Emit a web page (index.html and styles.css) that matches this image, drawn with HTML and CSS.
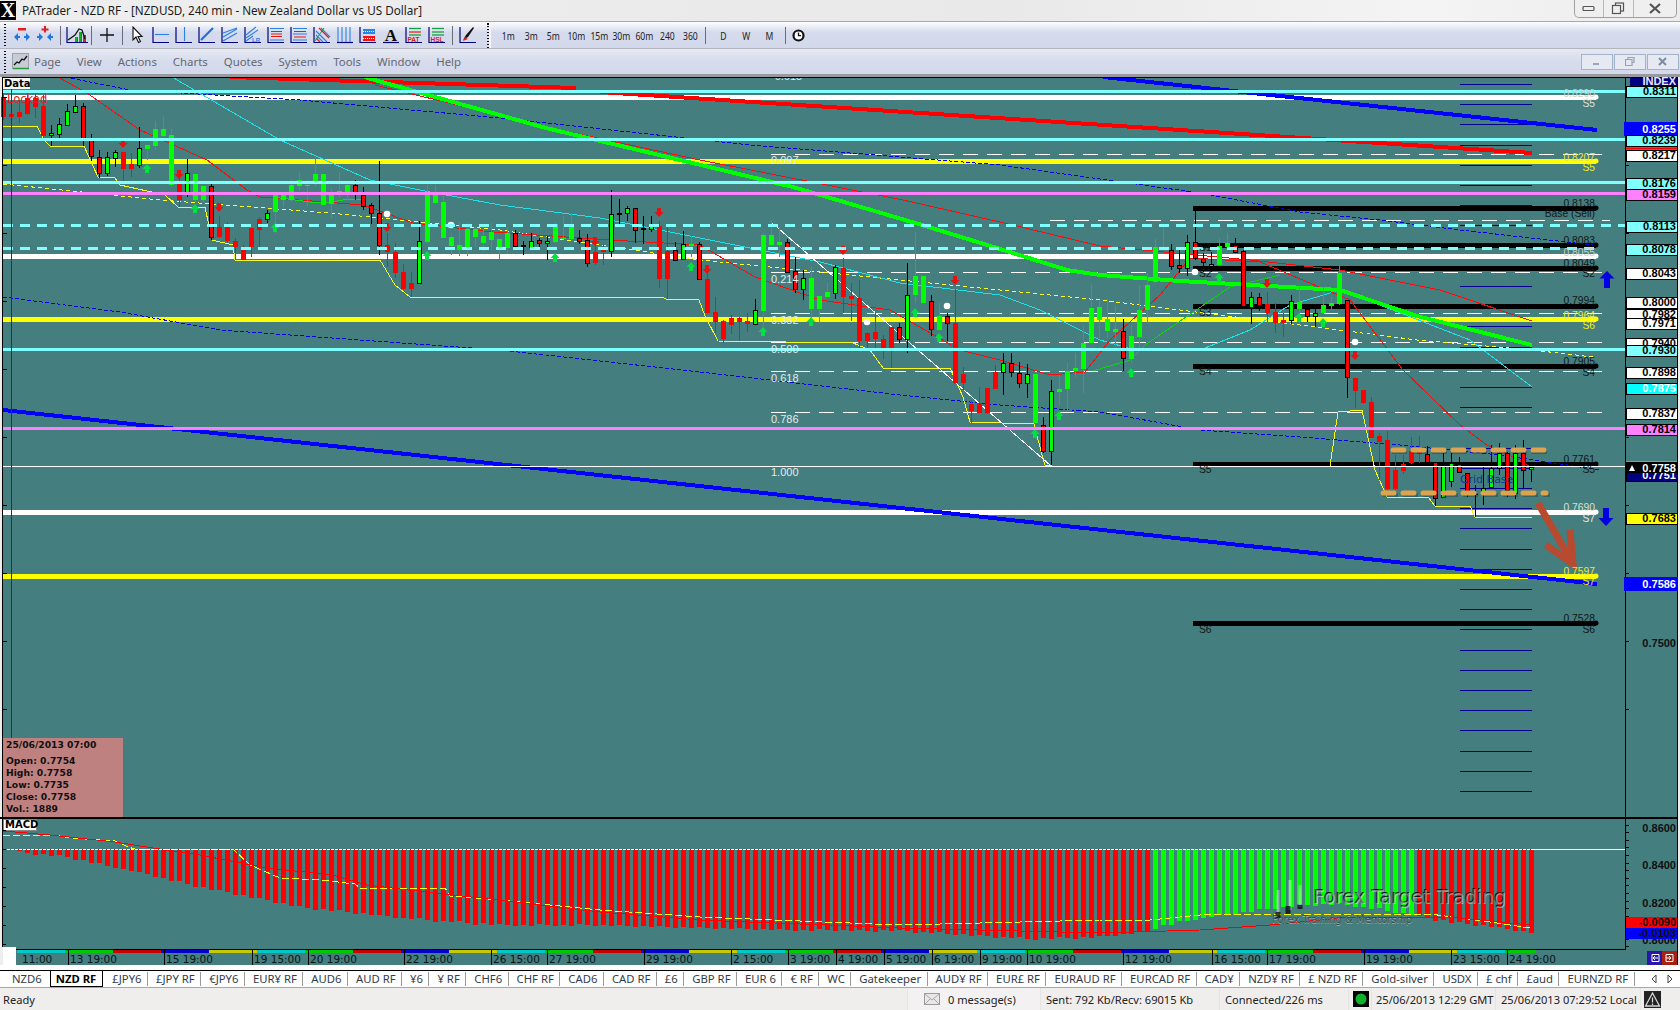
FILE: index.html
```html
<!DOCTYPE html>
<html lang="en">
<head>
<meta charset="utf-8">
<title>PATrader - NZD RF</title>
<link rel="stylesheet" href="styles.css">
</head>
<body>
<div class="app">
  <header class="titlebar">
    <span class="logo">X</span>
    <span class="title">PATrader - NZD RF - [NZDUSD, 240 min - New Zealand Dollar vs US Dollar]</span>
    <div class="winctl">
      <span class="wc wc1"><svg width="14" height="8" viewBox="0 0 14 8"><rect x="1" y="1.500" width="11" height="4" rx="1" class="ic-w"/></svg></span>
      <span class="wc wc2"><svg width="14" height="13" viewBox="0 0 14 13"><rect x="4.500" y="1" width="8" height="8" class="ic-w"/><rect x="1.500" y="3.500" width="8" height="8" class="ic-w ic-bg"/></svg></span>
      <span class="wc wc3"><svg width="14" height="12" viewBox="0 0 14 12"><path d="M2 1l10 9M12 1L2 10" class="ic-x"/></svg></span>
    </div>
  </header>

  <nav class="toolbar">
    <span class="grip"></span>
    <span class="tb"><svg width="18" height="18" viewBox="0 0 18 18"><rect x="5" y="2" width="8" height="2.500" fill="#e02020"/><path d="M1 11l4-4v3h2v2H5v3zM17 11l-4-4v3h-2v2h2v3z" fill="#1e78e0"/></svg></span>
    <span class="tb"><svg width="18" height="18" viewBox="0 0 18 18"><path d="M8 0h2v2.500h2.500v2H10v2H8v-2H5.500v-2H8z" fill="#e02020"/><path d="M7 11l-4-4v3H1v2h2v3zM11 11l4-4v3h2v2h-2v3z" fill="#1e78e0"/></svg></span>
    <span class="sep"></span>
    <span class="tb tb-wide"><svg width="22" height="18" viewBox="0 0 22 18"><path d="M1 1v15.500h21" class="f-navy"/><path d="M9 16v-5h3v5zM13 16V6h3v10zM17 16V9h3v7z" fill="#e02020"/><path d="M13 16V6h2v10zM9 16v-5h2v5z" fill="#10b020"/><path d="M2 14l7-5 4-6 3 1 3 9" class="f-blk"/></svg></span>
    <span class="sep sep-t"></span>
    <span class="tb"><svg width="16" height="16" viewBox="0 0 16 16"><path d="M8 1v14M1 8h14" class="f-blk"/></svg></span>
    <span class="sep"></span>
    <span class="tb"><svg width="16" height="18" viewBox="0 0 16 18"><path d="M3 1v13l3-3 2.500 5.500 2-1-2.500-5h4z" class="f-cur"/></svg></span>
    <span class="tb"><svg width="18" height="18" viewBox="0 0 18 18"><path d="M1 1v15.500h16" class="f-navy"/><path d="M3 8.500h14" class="f-bl"/></svg></span>
    <span class="tb"><svg width="18" height="18" viewBox="0 0 18 18"><path d="M1 1v15.500h16" class="f-navy"/><path d="M9.500 1v14" class="f-bl"/></svg></span>
    <span class="tb"><svg width="18" height="18" viewBox="0 0 18 18"><path d="M1 1v15.500h16" class="f-navy"/><path d="M3 14L15 2" class="f-bl2"/></svg></span>
    <span class="tb"><svg width="18" height="18" viewBox="0 0 18 18"><path d="M1 1v15.500h16" class="f-navy"/><path d="M2 11L16 3M2 15l14-8M2 7l14-5" class="f-bl"/></svg></span>
    <span class="tb"><svg width="18" height="18" viewBox="0 0 18 18"><path d="M1 1v15.500h16" class="f-navy"/><path d="M2 9L12 1M2 12l12-8M2 15l7-5" class="f-bl"/><text x="8" y="15.500" class="ico-t">LR</text></svg></span>
    <span class="tb"><svg width="18" height="18" viewBox="0 0 18 18"><path d="M1 1v15.500h16" class="f-navy"/><path d="M3 2.500h14M3 14h14" class="f-bl"/><path d="M4 5.500h11M4 8h11M4 10.500h11" class="f-red"/></svg></span>
    <span class="tb"><svg width="18" height="18" viewBox="0 0 18 18"><path d="M1 1v15.500h16" class="f-navy"/><path d="M3 2.500h14M3 8h14M3 14h14" class="f-bl"/><path d="M4 5.500h12M4 11h12" class="f-red"/></svg></span>
    <span class="tb"><svg width="18" height="18" viewBox="0 0 18 18"><path d="M1 1v15.500h16" class="f-navy"/><path d="M3 5l11 11M3 9l7 7M8 2l9 9" class="f-bl"/><path d="M3 12l4 4M6 2l10 10" class="f-red"/><path d="M2 15L11 2" class="f-gr"/></svg></span>
    <span class="tb"><svg width="18" height="18" viewBox="0 0 18 18"><path d="M1 16.500h16" class="f-navy"/><path d="M2 1v15M6 1v15M10 1v15M14 1v15" class="f-bl"/></svg></span>
    <span class="tb"><svg width="18" height="18" viewBox="0 0 18 18"><path d="M1 1v15.500h16" class="f-navy"/><rect x="4" y="3" width="12" height="5" fill="#2088e8"/><rect x="4" y="10" width="12" height="5" fill="#e81818"/><path d="M4 5.500h12M4 12.500h12" class="f-dot"/></svg></span>
    <span class="tb"><svg width="18" height="18" viewBox="0 0 18 18"><path d="M1 16.500h16" class="f-navy"/><text x="9" y="15" class="ico-a">A</text></svg></span>
    <span class="tb"><svg width="18" height="18" viewBox="0 0 18 18"><path d="M1 1v15.500h16" class="f-navy"/><path d="M4 2.500h12" class="f-gn"/><path d="M4 6h12" class="f-red"/><path d="M4 9h12" class="f-gn"/><text x="2.500" y="15.500" class="ico-r">PAT</text></svg></span>
    <span class="tb"><svg width="18" height="18" viewBox="0 0 18 18"><path d="M1 1v15.500h16" class="f-navy"/><path d="M4 2.500h12" class="f-gn"/><path d="M4 6h12" class="f-gn"/><path d="M4 9h12" class="f-gn"/><text x="2.500" y="15.500" class="ico-r">HSL</text></svg></span>
    <span class="sep"></span>
    <span class="tb"><svg width="18" height="18" viewBox="0 0 18 18"><path d="M1 1v15.500h16" class="f-navy"/><path d="M4 14l3-5 7-8 1 1-6 9z" fill="#111"/><path d="M6 11l-2 4 5-2z" fill="#d02828"/></svg></span>
    <span class="grip grip2"></span>
    <div class="tf">
      <span>1m</span><span>3m</span><span>5m</span><span>10m</span><span>15m</span><span>30m</span><span>60m</span><span>240</span><span>360</span>
      <i class="sep sep-f"></i>
      <span>D</span><span>W</span><span>M</span>
      <i class="sep sep-f sep-g"></i>
      <b class="clock"><svg width="13" height="13" viewBox="0 0 13 13"><circle cx="6.500" cy="6.500" r="5" class="f-clock"/><path d="M6.500 3.500v3.200h2.500" class="f-hand"/></svg></b>
    </div>
  </nav>

  <nav class="menubar">
    <span class="grip grip3"></span>
    <span class="menuicon"><svg width="17" height="17" viewBox="0 0 17 17"><rect x="0.500" y="0.500" width="16" height="15" class="mi-box"/><path d="M1 15.500h16" class="mi-g"/><path d="M2 12l3-3 2 1 3-4 2 1 3-4" class="f-blk"/></svg></span>
    <div class="menu">
      <span>Page</span><span>View</span><span>Actions</span><span>Charts</span><span>Quotes</span><span>System</span><span>Tools</span><span>Window</span><span>Help</span>
    </div>
    <div class="mdi">
      <span class="mb"><svg width="10" height="8" viewBox="0 0 10 8"><rect x="1" y="5" width="6" height="2" fill="#9aa6b8"/></svg></span>
      <span class="mb"><svg width="10" height="9" viewBox="0 0 10 9"><path d="M3 2.500V.500h6v5H7M.500 2.500h6.500v6H.500z" class="mi-r"/></svg></span>
      <span class="mb"><svg width="10" height="9" viewBox="0 0 10 9"><path d="M1 1l7 7M8 1L1 8" class="mi-x"/></svg></span>
    </div>
  </nav>

  <main class="chartwrap">
    <svg id="chart" class="chart" width="1680" height="888" viewBox="0 77 1680 888"></svg>
  </main>

  <div class="gap"></div>

  <nav class="tabs">
    <span class="tab">NZD6</span><span class="tab active">NZD RF</span><span class="tab">£JPY6</span><span class="tab">£JPY RF</span><span class="tab">€JPY6</span><span class="tab">EUR¥ RF</span><span class="tab">AUD6</span><span class="tab">AUD RF</span><span class="tab">¥6</span><span class="tab">¥ RF</span><span class="tab">CHF6</span><span class="tab">CHF RF</span><span class="tab">CAD6</span><span class="tab">CAD RF</span><span class="tab">£6</span><span class="tab">GBP RF</span><span class="tab">EUR 6</span><span class="tab">€ RF</span><span class="tab">WC</span><span class="tab">Gatekeeper</span><span class="tab">AUD¥ RF</span><span class="tab">EUR£ RF</span><span class="tab">EURAUD RF</span><span class="tab">EURCAD RF</span><span class="tab">CAD¥</span><span class="tab">NZD¥ RF</span><span class="tab">£ NZD RF</span><span class="tab">Gold-silver</span><span class="tab">USDX</span><span class="tab">£ chf</span><span class="tab">£aud</span><span class="tab">EURNZD RF</span>
    <span class="tabarrows">
      <svg width="6" height="10" viewBox="0 0 6 10"><path d="M5 1v8L1 5z" class="ta"/></svg>
      <svg width="6" height="10" viewBox="0 0 6 10"><path d="M1 1v8l4-4z" class="ta"/></svg>
    </span>
  </nav>

  <footer class="status">
    <span class="st st-ready">Ready</span>
    <span class="st st-msg"><svg width="16" height="12" viewBox="0 0 16 12"><rect x="0.500" y="0.500" width="15" height="11" class="mail"/><path d="M1 1l7 6 7-6M1 11l5-5M15 11l-5-5" class="mail-l"/></svg><span>0 message(s)</span></span>
    <span class="st st-sent">Sent: 792 Kb/Recv: 69015 Kb</span>
    <span class="st st-conn">Connected/226 ms</span>
    <span class="st st-led"><svg width="16" height="16" viewBox="0 0 16 16"><rect width="16" height="16" fill="#000"/><circle cx="8" cy="8" r="5.500" fill="#0fb02a"/></svg></span>
    <span class="st st-gmt">25/06/2013 12:29 GMT</span>
    <span class="st st-loc">25/06/2013 07:29:52 Local</span>
    <span class="st st-warn"><svg width="17" height="17" viewBox="0 0 17 17"><rect width="17" height="17" fill="#222"/><path d="M8.500 2L15.500 15h-14z" class="warn"/><path d="M8.500 6.500v5M8.500 12.500v1.500" class="warn"/></svg></span>
  </footer>
</div>
<script src="script.js"></script>
</body>
</html>
```

FILE: styles.css
```css
* { box-sizing: border-box; }
html, body { margin: 0; padding: 0; background: #fff; }
body { font-family: "Noto Sans", "Liberation Sans", sans-serif; font-size: 12px; color: #222; }
.app { width: 1680px; height: 1010px; overflow: hidden; display: flex; flex-direction: column; }

.titlebar { height: 22px; flex: none; display: flex; align-items: flex-start; background: linear-gradient(90deg, #eeeeee 0, #e9e9e9 60%, #f4f4f4 85%, #ececec 100%); border-bottom: 1px solid #a8a8a8; }
.logo { width: 16px; height: 19px; margin-top: 1px; background: #000; color: #fff; font: bold 20px/19px "Liberation Serif", serif; text-align: center; }
.title { margin: 2px 0 0 6px; font-size: 11.700px; line-height: 17px; color: #1c1c1c; white-space: nowrap; }
.winctl { margin-left: auto; margin-right: 3px; width: 103px; height: 18px; display: flex; border: 1px solid #a0a0a0; border-top: 0; border-radius: 0 0 5px 5px; background: #efefef; }
.wc { flex: 1; display: flex; align-items: center; justify-content: center; border-right: 1px solid #b8b8b8; }
.wc3 { border-right: 0; flex: 1.500; }
.ic-w { fill: none; stroke: #555; stroke-width: 1.200; }
.ic-bg { fill: #efefef; }
.ic-x { fill: none; stroke: #555; stroke-width: 2.200; }

.toolbar { height: 27px; flex: none; display: flex; align-items: center; padding-left: 4px; background: linear-gradient(180deg, #fdfdfe 0, #d5dbec 40%, #d3d9ea 100%); border-bottom: 1px solid #b4b6be; position: relative; }
.grip { width: 2px; height: 22px; margin-right: 4px; background: repeating-linear-gradient(180deg, #111 0 1.500px, transparent 1.500px 3px); }
.grip2 { height: 25px; margin-left: 8px; margin-right: 3px; box-shadow: 2px 0 0 #f6f6fa; }
.grip3 { height: 22px; margin-right: 6px; }
.tb { width: 23px; height: 20px; display: flex; align-items: center; justify-content: center; flex: none; }
.tb-wide { width: 26px; }
.sep { width: 1px; height: 19px; flex: none; background: #6c6c78; margin: 0 3px 0 4px; }
.sep-t { margin-left: 1px; }
.sep-f { margin: 0 6px 0 4px; height: 17px; }
.sep-g { margin: 0 6px 0 5px; }
.tf { display: flex; align-items: center; margin-left: 5px; font-size: 11px; color: #222; }
.tf span { width: 22.700px; text-align: center; transform: scaleX(0.78); white-space: nowrap; display: flex; justify-content: center; }
.clock { display: flex; }

.f-navy { fill: none; stroke: #000080; stroke-width: 1.200; }
.f-bl { fill: none; stroke: #2a80e4; stroke-width: 1.100; }
.f-bl2 { fill: none; stroke: #1e70d8; stroke-width: 2.200; }
.f-red { fill: none; stroke: #e81818; stroke-width: 1.200; }
.f-gn { fill: none; stroke: #18a040; stroke-width: 1.300; }
.f-gr { fill: none; stroke: #10a040; stroke-width: 1; }
.f-blk { fill: none; stroke: #111; stroke-width: 1.300; }
.f-cur { fill: #fff; stroke: #111; stroke-width: 1.100; }
.f-dot { fill: none; stroke: #fff; stroke-width: 1; stroke-dasharray: 1 1; }
.f-clock { fill: #fff; stroke: #111; stroke-width: 2.200; }
.f-hand { fill: none; stroke: #111; stroke-width: 1.300; }
.ico-t { font: bold 6px "Liberation Sans", sans-serif; fill: #2a80e4; }
.ico-a { font: bold 17px "Liberation Serif", serif; fill: #0a0a0a; text-anchor: middle; }
.ico-r { font: bold 6.500px "Liberation Sans", sans-serif; fill: #e01818; }

.menubar { height: 28px; flex: none; display: flex; align-items: center; padding-left: 4px; background: linear-gradient(180deg, #e6e9f3 0, #d6dcec 50%, #d3d9ea 100%); border-bottom: 3px solid #989aa0; position: relative; }
.menuicon { width: 17px; height: 17px; margin-right: 5px; display: flex; }
.mi-box { fill: #c9cbd6; stroke: #a0a0a8; }
.mi-g { stroke: #20a030; fill: none; stroke-width: 1.500; }
.menu { display: flex; gap: 16px; color: #656872; font-size: 11.400px; }
.mdi { margin-left: auto; margin-right: 1px; display: flex; gap: 1px; }
.mb { width: 32px; height: 16px; display: flex; align-items: center; justify-content: center; border: 1px solid #a4b4c8; background: #e6e9f2; }
.mi-r { fill: none; stroke: #96a2b4; stroke-width: 1.200; }
.mi-x { fill: none; stroke: #7d8ba0; stroke-width: 2; }

.chartwrap { height: 888px; flex: none; background: #e8e8ea; }
.chart { display: block; }
.gap { height: 5px; background: #fff; flex: none; }

.tabs { height: 18px; flex: none; display: flex; align-items: flex-start; padding-left: 4px; background: #fff; border-top: 1px solid #000; border-bottom: 1px solid #a8a8a8; font-size: 11.300px; color: #333c48; }
.tab { height: 14px; margin-top: 1px; line-height: 14px; padding: 0 5.500px 0 8px; border-right: 1px solid #9a9a9a; white-space: nowrap; }
.tab:first-child { border-right: 0; padding-right: 8px; }
.tab.active { height: 16px; margin-top: 0; padding: 0 6px 0 5px; margin-right: 1px; border-left: 1px solid #000; border-right: 1px solid #000; border-bottom: 1px solid #000; color: #000; font-weight: 700; line-height: 15px; }
.tabarrows { margin-left: auto; margin-right: 7px; margin-top: 3px; display: flex; gap: 10px; }
.ta { fill: #fff; stroke: #444; stroke-width: 1; }

.status { flex: 1; display: flex; align-items: center; background: #f0eded; font-size: 11.100px; color: #222; }
.st { height: 100%; display: flex; align-items: center; flex: none; white-space: nowrap; border-left: 1px solid #e6e3e3; padding-left: 5px; }
.st-ready { width: 907px; padding-left: 3px; border-left: 0; }
.st-msg { width: 133px; padding-left: 16px; gap: 8px; background: #f3f1f1; }
.st-sent { width: 179px; }
.st-conn { width: 129px; }
.st-led { width: 23px; padding-left: 4px; }
.st-gmt { width: 124px; padding-left: 4px; }
.st-loc { width: 145px; }
.st-warn { padding-left: 3px; }
.mail { fill: #e8e8e8; stroke: #9c9c9c; }
.mail-l { fill: none; stroke: #a8a8a8; }
.warn { fill: none; stroke: #d8d8d8; stroke-width: 1.300; }

.lbl { font: bold 11px "Liberation Sans", sans-serif; text-anchor: end; }
.lv { font: 10.300px "Liberation Sans", sans-serif; text-anchor: end; }
.lvl { font: 10.300px "Liberation Sans", sans-serif; }
.fib { font: 11px "Liberation Sans", sans-serif; fill: #e2ecec; }
.tm { font: 10.500px "DejaVu Sans", sans-serif; fill: #0a1414; }
.info { font: bold 9.200px "DejaVu Sans", sans-serif; fill: #101010; }
.tabl { font: bold 10px "DejaVu Sans", sans-serif; fill: #000; }
.lock { font: 11.500px "DejaVu Sans", sans-serif; fill: #e02020; }
.gb { font: 11px "DejaVu Sans", sans-serif; fill: #0a3a90; }
.wm1 { font: 19px "DejaVu Sans", sans-serif; }
.wm2 { font: 10px "DejaVu Sans", sans-serif; }
.crisp { shape-rendering: crispEdges; }
```

FILE: script.js
```js
(function () {
  var TEAL = '#447e7e', CY = '#80ffff', WH = '#ffffff', YE = '#ffff00', BK = '#000000', PK = '#ff80ff', LIME = '#00ff00', RED = '#ff0000', BL = '#0000ff';
  var s = [];
  function R(x, y, w, h, f, extra) { s.push('<rect class="crisp" x="' + x + '" y="' + y + '" width="' + w + '" height="' + h + '" fill="' + f + '"' + (extra || '') + '/>'); }
  function H(x1, x2, y, h, c, dash) { s.push('<path class="crisp" d="M' + x1 + ' ' + y + 'H' + x2 + '" stroke="' + c + '" stroke-width="' + h + '" fill="none"' + (dash ? ' stroke-dasharray="' + dash + '"' : '') + '/>'); }
  function P(pts, c, w, dash) { s.push('<polyline class="crisp" points="' + pts.map(function (p) { return p.join(','); }).join(' ') + '" stroke="' + c + '" stroke-width="' + w + '" fill="none"' + (dash ? ' stroke-dasharray="' + dash + '"' : '') + '/>'); }
  function T(x, y, t, cls, fill, op) { s.push('<text x="' + x + '" y="' + y + '" class="' + cls + '"' + (fill ? ' fill="' + fill + '"' : '') + (op ? ' opacity="' + op + '"' : '') + '>' + t + '</text>'); }
  function thick(x1, x2, y, h, c) { H(x1, x2 - 2, y, h, c); s.push('<circle cx="' + (x2 - 2) + '" cy="' + y + '" r="' + h / 2 + '" fill="' + c + '"/>'); }

  R(0, 77, 1680, 888, '#eeeeee');
  R(3, 77, 1675, 888, TEAL);

  // navy grid ticks
  for (var i = 0; i < 36; i++) { var ny = Math.round(84 + 20.2 * i); if (ny < 800) H(1460, 1532, ny + 0.5, 1, '#000090'); }

  // fib thin dashed lines
  [154, 272, 313, 342, 371, 412].forEach(function (y) { H(771, 1605, y + 0.5, 1, WH, '15 9'); });
  H(1050, 1610, 220.5, 1, WH, '15 9');

  // thick horizontal levels under candles
  thick(3, 1598, 97, 5, WH);
  thick(3, 1598, 161, 5, YE);
  thick(3, 1598, 256, 5, WH);
  thick(3, 1598, 319, 5, YE);
  thick(3, 1598, 512, 5, WH);
  thick(3, 1598, 576, 5, YE);
  [208, 245, 268, 306, 366, 464, 623].forEach(function (y) { thick(1193, 1598, y, 5, BK); });

  // moving averages
  P([[65, 77], [130, 90], [300, 100], [500, 118], [750, 145], [1000, 165], [1200, 193], [1300, 212], [1380, 220], [1460, 230], [1593, 245]], '#0000e0', 1, '4 2');
  P([[3, 297], [120, 312], [220, 330], [500, 350], [700, 372], [900, 395], [1000, 405], [1100, 412], [1200, 430], [1300, 437], [1400, 445], [1500, 455], [1600, 470]], '#0000e0', 1, '4 2');
  P([[3, 184], [160, 200], [330, 213], [500, 230], [700, 260], [900, 280], [1100, 300], [1300, 325], [1417, 340], [1532, 350], [1593, 357]], '#ffff20', 1, '4 3');
  P([[172, 77], [280, 140], [370, 180], [430, 192], [500, 205], [600, 218], [700, 238], [820, 262], [900, 283], [1000, 295], [1040, 310], [1100, 340], [1135, 350], [1205, 348], [1250, 330], [1290, 305], [1340, 290], [1367, 300], [1470, 340], [1532, 387]], '#20e0e8', 1);
  P([[58, 77], [87, 93], [140, 130], [207, 160], [247, 190], [260, 197], [363, 205], [413, 223], [493, 232], [610, 240], [700, 245], [755, 277], [820, 300], [890, 310], [960, 350], [1000, 360], [1050, 375], [1085, 372], [1110, 340], [1160, 295], [1190, 258], [1260, 262], [1350, 300], [1403, 370], [1460, 425], [1487, 445], [1520, 460], [1530, 467]], '#f01010', 1);
  P([[375, 85], [560, 130], [700, 160], [903, 200], [1000, 222], [1100, 246], [1250, 260], [1340, 270], [1440, 290], [1532, 321]], '#f01010', 1);
  P([[273, 197], [310, 202], [330, 202], [350, 199], [365, 199]], '#10e010', 1);
  P([[1093, 371], [1130, 360], [1145, 345], [1230, 287], [1280, 275]], '#10d010', 1);
  // heavy trend lines
  P([[230, 77], [576, 88]], RED, 4);
  P([[600, 92], [1532, 153]], RED, 4);
  P([[1103, 77], [1597, 130]], BL, 4);
  P([[3, 410], [1597, 584]], BL, 4);
  P([[364, 77], [546, 128], [793, 187], [922, 225], [997, 248], [1067, 270], [1100, 275], [1180, 281], [1340, 290], [1417, 316], [1532, 345]], LIME, 4);
  // step line
  P([[3, 126], [37, 126], [44, 140], [50, 146], [84, 146], [98, 177], [115, 178], [120, 185], [165, 195], [178, 207], [205, 207], [212, 240], [233, 245], [235, 260], [380, 260], [395, 285], [410, 297], [662, 297], [666, 299], [699, 300], [705, 316], [718, 341], [853, 343], [870, 350], [883, 368], [950, 368], [963, 397], [970, 422], [1034, 424], [1042, 455], [1045, 465], [1052, 466]], '#f8f820', 1);
  P([[1330, 466], [1338, 412], [1362, 410], [1375, 470], [1387, 497], [1428, 497], [1435, 506], [1470, 506], [1475, 517], [1532, 517]], '#f8f820', 1);
  P([[1052, 466], [1330, 466]], '#f8f820', 1, '10 14');
  // fib diagonal
  P([[771, 222], [1050, 465]], WH, 1);

  // candles: x, top, bottom, wickTop, wickBottom, type
  var groups = [
    [0, 70, [[10, 80, 140, 70, 150, 'r'], [34, 132, 140, 90, 165, 'r'], [58, 125, 140, 90, 158, 'r'], [82, 85, 132, 60, 135, 'r'], [106, 85, 110, 60, 143, 'r'], [130, 108, 198, 75, 205, 'r'], [154, 190, 196, 165, 228, 'k'], [178, 163, 193, 145, 203, 'k'], [202, 124, 166, 102, 168, 'k'], [226, 108, 125, 75, 130, 'k'], [250, 108, 203, 100, 228, 'x'], [274, 203, 258, 192, 272, 'x'], [298, 260, 308, 240, 323, 'x'], [322, 262, 308, 246, 318, 'k'], [346, 247, 263, 240, 290, 'k'], [370, 245, 296, 245, 332, 'r'], [394, 283, 296, 250, 320, 'r'], [418, 235, 284, 170, 295, 'k'], [442, 225, 236, 225, 270, 'l'], [466, 178, 228, 153, 240, 'l'], [490, 177, 198, 138, 200, 'l'], [514, 195, 345, 177, 350, 'l'], [538, 340, 390, 300, 410, 'r'], [562, 310, 366, 268, 380, 'k'], [586, 312, 390, 312, 395, 'l'], [610, 348, 390, 348, 395, 'l'], [634, 348, 500, 340, 510, 'x'], [658, 470, 502, 438, 505, 'r'], [682, 470, 514, 455, 520, 'r'], [706, 514, 530, 505, 570, 'r'], [730, 530, 570, 525, 570, 'r'], [754, 474, 530, 474, 560, 'r'], [778, 448, 480, 440, 530, 'r'], [802, 428, 448, 420, 460, 'k'], [826, 375, 427, 375, 490, 'l'], [850, 375, 390, 375, 412, 'l'], [874, 345, 390, 328, 395, 'l'], [898, 330, 348, 305, 362, 'l'], [922, 345, 345, 330, 408, 'l'], [946, 312, 332, 260, 350, 'l'], [970, 312, 405, 312, 405, 'l'], [994, 376, 402, 355, 448, 'l'], [1018, 363, 367, 305, 380, 'l'], [1042, 345, 365, 332, 390, 'l'], [1066, 346, 372, 330, 390, 'x'], [1090, 376, 408, 350, 420, 'x'], [1114, 405, 430, 400, 462, 'x'], [1138, 430, 526, 272, 556, 'x'], [1162, 525, 545, 490, 590, 'r'], [1186, 545, 610, 520, 625, 'r'], [1210, 606, 656, 582, 660, 'r'], [1234, 640, 656, 605, 682, 'r'], [1258, 514, 640, 452, 642, 'k'], [1282, 375, 515, 345, 520, 'l'], [1306, 375, 400, 345, 402, 'l'], [1330, 396, 503, 375, 505, 'l'], [1354, 502, 528, 490, 555, 'l'], [1378, 525, 540, 455, 558, 'l'], [1402, 478, 540, 460, 558, 'l'], [1426, 478, 500, 470, 530, 'l'], [1450, 498, 518, 478, 545, 'l'], [1474, 486, 510, 460, 540, 'l']]],
    [495, 180, [[13, 177, 203, 177, 238, 'l'], [37, 160, 205, 140, 222, 'l'], [61, 160, 197, 150, 200, 'x'], [85, 195, 200, 182, 225, 'd'], [109, 183, 200, 160, 202, 'k'], [133, 180, 188, 175, 210, 'x'], [157, 182, 188, 168, 240, 'k'], [181, 133, 185, 125, 190, 'l'], [205, 175, 177, 108, 178, 'l'], [229, 140, 177, 100, 180, 'l'], [253, 175, 182, 150, 192, 'x'], [277, 180, 248, 162, 262, 'x'], [301, 215, 250, 170, 256, 'r'], [325, 211, 215, 192, 256, 'r'], [349, 102, 214, 30, 230, 'k'], [373, 100, 104, 56, 135, 'd'], [397, 85, 100, 78, 122, 'k'], [421, 85, 150, 85, 188, 'x'], [445, 145, 149, 108, 192, 'd'], [469, 138, 146, 108, 155, 'k'], [493, 138, 297, 122, 325, 'r'], [517, 212, 297, 140, 356, 'r'], [541, 210, 240, 186, 242, 'x'], [565, 192, 238, 153, 240, 'k'], [589, 192, 198, 167, 232, 'l']]],
    [700, 200, [[-2, 132, 238, 125, 240, 'x'], [22, 237, 340, 220, 342, 'r'], [46, 336, 365, 290, 400, 'r'], [70, 363, 416, 360, 430, 'r'], [94, 354, 375, 345, 402, 'r'], [118, 354, 366, 350, 422, 'r'], [142, 363, 371, 340, 395, 'r'], [166, 331, 371, 297, 372, 'k'], [190, 105, 332, 100, 390, 'l'], [214, 105, 135, 60, 140, 'l'], [238, 126, 135, 80, 170, 'l'], [262, 126, 215, 118, 218, 'x'], [286, 214, 268, 172, 278, 'x'], [310, 235, 268, 210, 300, 'k'], [334, 235, 326, 200, 370, 'l'], [358, 288, 326, 288, 370, 'l'], [382, 276, 290, 250, 292, 'l'], [406, 202, 278, 195, 297, 'k'], [430, 205, 290, 175, 340, 'r'], [454, 288, 296, 250, 362, 'r'], [478, 293, 423, 240, 445, 'r'], [502, 400, 422, 395, 445, 'r'], [526, 396, 418, 335, 445, 'r'], [550, 418, 443, 405, 478, 'r'], [574, 380, 445, 380, 503, 'r'], [598, 380, 418, 370, 430, 'x'], [622, 286, 418, 190, 458, 'k'], [646, 228, 286, 95, 310, 'l'], [670, 228, 308, 228, 310, 'l'], [694, 304, 388, 285, 408, 'x'], [718, 348, 390, 308, 392, 'l'], [742, 348, 370, 338, 423, 'x'], [766, 370, 550, 267, 552, 'r'], [790, 521, 548, 500, 570, 'r'], [814, 612, 634, 600, 668, 'r'], [838, 610, 638, 560, 640, 'r'], [862, 564, 640, 564, 642, 'r'], [886, 516, 566, 495, 568, 'r'], [910, 490, 516, 460, 585, 'k'], [934, 490, 516, 460, 530, 'x'], [958, 518, 550, 487, 565, 'x'], [982, 523, 550, 492, 595, 'k'], [1006, 522, 670, 522, 672, 'l'], [1030, 674, 754, 650, 760, 'x'], [1054, 574, 754, 540, 795, 'k'], [1078, 568, 575, 525, 615, 'l'], [1102, 512, 568, 490, 632, 'l'], [1126, 505, 513, 460, 530, 'l'], [1150, 430, 506, 378, 578, 'l']]],
    [1090, 190, [[4, 354, 460, 282, 465, 'l'], [28, 350, 390, 333, 445, 'l'], [52, 387, 424, 327, 445, 'l'], [76, 417, 427, 348, 470, 'l'], [100, 423, 505, 388, 543, 'x'], [124, 437, 508, 405, 518, 'l'], [148, 360, 440, 285, 475, 'l'], [172, 285, 360, 250, 400, 'l'], [196, 170, 275, 147, 278, 'l'], [220, 170, 178, 108, 180, 'l'], [244, 180, 227, 163, 240, 'x'], [268, 226, 233, 180, 250, 'x'], [292, 157, 233, 135, 258, 'k'], [316, 157, 205, 55, 210, 'x'], [340, 208, 215, 188, 245, 'x'], [364, 222, 228, 185, 245, 'k'], [388, 168, 225, 145, 228, 'l'], [412, 160, 170, 130, 172, 'l'], [436, 165, 186, 145, 188, 'x'], [460, 183, 347, 180, 350, 'x'], [484, 322, 350, 305, 402, 'k'], [508, 322, 344, 310, 362, 'x'], [532, 342, 370, 305, 395, 'r'], [556, 366, 398, 338, 430, 'r'], [580, 390, 400, 368, 440, 'r'], [604, 334, 390, 315, 402, 'k'], [628, 335, 358, 290, 400, 'l'], [652, 356, 378, 356, 395, 'x'], [676, 370, 377, 345, 412, 'k'], [700, 345, 370, 292, 372, 'l'], [724, 340, 348, 320, 360, 'l'], [748, 250, 342, 225, 345, 'l']]],
    [1300, 300, [[142, 0, 232, 0, 295, 'x'], [166, 234, 272, 234, 325, 'r'], [190, 270, 310, 270, 312, 'r'], [214, 306, 413, 290, 415, 'r'], [238, 407, 425, 400, 540, 'r'], [262, 420, 567, 393, 570, 'r'], [286, 510, 567, 465, 570, 'r'], [310, 491, 512, 465, 522, 'r'], [334, 452, 490, 410, 492, 'r'], [358, 450, 462, 408, 490, 'r'], [382, 463, 485, 438, 487, 'x'], [406, 485, 593, 485, 618, 'x'], [430, 498, 592, 460, 595, 'k'], [454, 490, 544, 458, 562, 'k'], [478, 492, 517, 470, 520, 'x'], [502, 518, 572, 518, 590, 'x'], [526, 583, 585, 555, 650, 'd'], [550, 563, 572, 490, 615, 'k'], [574, 505, 562, 435, 565, 'k'], [598, 458, 505, 430, 525, 'k'], [622, 460, 570, 455, 590, 'x'], [646, 458, 578, 435, 598, 'k'], [670, 460, 510, 420, 565, 'x'], [694, 500, 508, 490, 545, 'k']]]
  ];
  groups.forEach(function (g) {
    g[2].forEach(function (c) {
      var cx = Math.round(g[0] + c[0] / 3 - 0.34), t = Math.round(g[1] + c[1] / 3), b = Math.round(g[1] + c[2] / 3), wt = Math.round(g[1] + c[3] / 3), wb = Math.round(g[1] + c[4] / 3), ty = c[5];
      var wc = ty === 'l' ? '#10c810' : ty === 'r' ? '#f01010' : BK;
      if (b <= t) b = t + 1;
      R(cx, wt, 1, wb - wt, wc);
      if (ty === 'l') R(cx - 2, t, 5, b - t, LIME);
      else if (ty === 'r') R(cx - 2, t, 5, b - t, RED);
      else if (ty === 'd') R(cx - 2, t, 5, b - t, BK);
      else { R(cx - 2, t, 5, b - t + 1, BK); if (b - t > 1) R(cx - 1, t + 1, 3, b - t - 1, ty === 'k' ? LIME : RED); }
    });
  });

  // signal arrows and dots
  [[147, 169], [195, 209], [275, 228], [427, 256], [555, 258], [691, 267], [763, 332], [811, 322], [915, 313], [939, 338], [1035, 434], [1059, 416], [1131, 373], [1219, 278], [1299, 318], [1323, 323]].forEach(function (a) {
    s.push('<path d="M' + a[0] + ' ' + (a[1] - 5) + 'l4.500 5h-2.500v4h-4v-4h-2.500z" fill="#00e040"/>');
  });
  [[123, 143], [179, 174], [219, 207], [387, 227], [595, 241], [659, 212], [707, 269], [843, 250], [955, 280], [1267, 283], [1355, 355]].forEach(function (a) {
    s.push('<path d="M' + a[0] + ' ' + (a[1] + 5) + 'l-4.500 -5h2.500v-4h4v4h2.500z" fill="#e81010"/>');
  });
  [[387, 214], [451, 225], [867, 322], [947, 306], [1195, 272], [1355, 342]].forEach(function (d) {
    s.push('<circle cx="' + d[0] + '" cy="' + d[1] + '" r="3.300" fill="#fff"/>');
  });

  // levels above candles
  H(3, 1625, 91, 3, CY);
  H(3, 1625, 139, 3, CY);
  H(3, 1625, 182, 3, CY);
  H(3, 1625, 193.5, 3, PK);
  H(3, 1625, 225, 3, CY, '10 7');
  H(3, 1597, 248, 3, CY, '10 7');
  H(3, 1625, 349, 3, CY);
  H(3, 1625, 428.5, 3, PK);
  H(3, 1625, 466.5, 1, WH);

  // grid base zone
  s.push('<path d="M1392 452H1550M1383 495H1550" stroke="#20302f" stroke-width="4" opacity="0.35" stroke-dasharray="15 5"/>');
  s.push('<path d="M1393 450H1546M1383 493H1546" stroke="#dfa24d" stroke-width="5" stroke-linecap="round" stroke-dasharray="11 9"/>');
  T(1460, 483, 'Grid Base', 'gb');

  // forecast arrow
  s.push('<path d="M1538 503L1573 564M1546 545L1573 564L1570 530" stroke="#b84a30" stroke-width="7" fill="none"/>');
  // side arrows
  s.push('<path d="M1607 271l7.500 7.500h-4.500v9.500h-6v-9.500h-4.500z" fill="#0000e0"/>');
  s.push('<path d="M1606 526l7.500 -8h-4.500v-10h-6v10h-4.500z" fill="#0000e0"/>');

  // fib labels
  T(771, 80, '-0.618', 'fib');
  T(771, 164, '0.097', 'fib');
  [['0.214', 283], ['0.382', 324], ['0.500', 353], ['0.618', 382], ['0.786', 423], ['1.000', 476]].forEach(function (f) { T(771, f[1], f[0], 'fib'); });

  // level labels
  [['0.8290', 97, '#c8d0c8'], ['S5', 107, '#e0e0d8'], ['0.8207', 161, '#e8e840'], ['S5', 171, '#ecec20'], ['0.8138', 207, '#101818'], ['Base (Sell)', 217, '#101818'], ['0.8083', 244, '#101818'], ['0.8055', 256, '#c8d0c8'], ['0.8049', 267, '#101818'], ['S2', 277, '#101818'], ['0.7994', 304, '#101818'], ['0.7964', 319, '#e8e840'], ['S6', 329, '#ecec20'], ['0.7905', 365, '#101818'], ['S4', 376, '#101818'], ['0.7761', 463, '#101818'], ['S5', 473, '#101818'], ['0.7690', 511, '#d8e0d8'], ['S7', 522, '#e8e8e0'], ['0.7597', 575, '#e8e840'], ['S7', 585, '#ecec20'], ['0.7528', 622, '#101818'], ['S6', 633, '#101818']].forEach(function (l) { T(1595, l[1], l[0], 'lv', l[2]); });
  [['S1', 251], ['S2', 277], ['S3', 316], ['S4', 375], ['S5', 473], ['S6', 633]].forEach(function (l) { T(1199, l[1], l[0], 'lvl', '#101818'); });

  // left decoration
  R(11, 77, 1, 661, '#7a1616');
  for (var k = 0; k < 10; k++) R(3, 97 + 68 * k, 4, 1, BK);
  R(3, 78, 27, 11, '#f4f6f6');
  T(4, 87, 'Data', 'tabl');
  T(7, 103, 'Locked', 'lock');

  // info box
  R(3, 738, 120, 79, '#bf8080');
  T(6, 748, '25/06/2013 07:00', 'info');
  [['Open: 0.7754', 764], ['High: 0.7758', 776], ['Low: 0.7735', 788], ['Close: 0.7758', 800], ['Vol.: 1889', 812]].forEach(function (t) { T(6, t[1], t[0], 'info'); });

  // MACD pane
  R(0, 817, 1678, 2, BK);
  R(3, 819, 33, 11, '#ffffff', ' stroke="#888" stroke-width="1"');
  T(5, 828, 'MACD', 'tabl');
  var way = [[19, 852], [67, 857], [100, 864], [150, 875], [200, 887], [250, 897], [300, 907], [350, 912], [400, 918], [467, 923], [500, 925], [600, 925], [700, 928], [800, 930], [900, 931], [1000, 937], [1030, 939], [1100, 937], [1150, 932], [1154, 928], [1180, 922], [1210, 917], [1240, 913], [1270, 909], [1300, 905], [1340, 904], [1370, 908], [1414, 915], [1418, 917], [1450, 922], [1500, 928], [1531, 932]];
  function lerp(x) { for (var i = 1; i < way.length; i++) { if (x <= way[i][0]) { var a = way[i - 1], b = way[i]; return a[1] + (b[1] - a[1]) * (x - a[0]) / (b[0] - a[0]); } } return way[way.length - 1][1]; }
  for (var m = 0; m < 190; m++) {
    var mx = 19.3 + 8 * m, mb = Math.round(lerp(mx) + ((m * 7) % 5 - 2) * 0.5);
    R(Math.round(mx) - 2, 849, 5, mb - 849, (mx > 1152 && mx < 1416) ? LIME : RED);
  }
  P([[3, 835], [55, 835], [70, 838], [115, 841], [128, 847], [135, 849], [233, 849], [250, 865], [280, 878], [320, 880], [355, 884], [360, 888], [445, 888], [450, 896], [500, 900], [600, 910], [700, 917], [900, 925], [1100, 920], [1150, 920], [1210, 914], [1430, 914], [1490, 922], [1530, 928]], YE, 1, '7 3');
  P([[3, 831], [50, 835], [115, 842], [153, 848], [200, 855], [267, 868], [333, 875], [367, 885], [433, 893], [500, 900], [600, 912], [700, 920], [900, 928], [1100, 933], [1200, 930], [1270, 925], [1340, 918], [1450, 917], [1530, 925]], RED, 1);
  H(3, 1533, 849.5, 1, WH, '3 1');
  H(1533, 1625, 849.5, 1, WH);
  // left ticks in MACD
  for (var k2 = 0; k2 < 7; k2++) R(3, 830 + 19 * k2, 3, 1, BK);

  // watermark
  s.push('<path d="M1278 890v24M1290 880v30M1300 885v22" stroke="#e8f0f0" stroke-width="3" opacity="0.45"/>');
  s.push('<path d="M1278 912v6M1288 906v8M1300 905v4" stroke="#000" stroke-width="5" opacity="0.7"/>');
  T(1313, 903, 'Forex Target Trading', 'wm1', '#000000', '0.8');
  T(1314, 904, 'Forex Target Trading', 'wm1', '#f2f6f6', '0.45');
  T(1272, 924, 'Forex Training &amp; Mentorship', 'wm2', '#c4cccc', '0.6');
  T(1272, 923, 'Forex Training &amp; Mentorship', 'wm2', '#324040', '0.8');

  // frame
  R(2, 77, 1, 870, BK);
  R(3, 77, 1675, 1, BK);
  R(1625, 77, 1, 873, BK);
  R(1677, 77, 1, 888, BK);
  R(3, 949, 1623, 1, BK);

  // right axis ticks
  for (var a = 0; a < 10; a++) R(1626, 97 + 68 * a, 3, 1, BK);
  for (var a2 = 0; a2 < 17; a2++) R(1626, 825 + 7.6 * a2 | 0, 3, 1, BK);

  // axis labels
  R(1630, 78, 47, 8, '#000080');
  T(1676, 85, 'INDEX', 'lbl', '#e8e8ff');
  [
    ['0.8255', 129, BL, WH, 1], ['0.8311', 91, CY], ['0.8239', 140, CY], ['0.8217', 155, WH], ['0.8176', 183, CY], ['0.8159', 194, PK], ['0.8113', 226, CY], ['0.8078', 249, CY], ['0.8043', 273, WH], ['0.8000', 302, WH], ['0.7982', 314, WH], ['0.7971', 323, WH], ['0.7940', 343, WH], ['0.7930', 350, CY], ['0.7898', 372, WH], ['0.7875', 388, '#00ffff', WH], ['0.7837', 413, WH], ['0.7814', 429, PK], ['0.7751', 475, '#000080', WH], ['0.7683', 518, YE], ['0.7586', 584, BL, WH, 1]
  ].forEach(function (l) {
    var big = l[4];
    if (big) R(1624, l[1] - 7, 54, 14, l[2]);
    else R(1626, l[1] - 5, 51, 11, l[2], ' stroke="#000" stroke-width="1"');
    T(1676, l[1] + 4, String(l[0]), 'lbl', l[3] || '#000');
  });
  R(1626, 148, 51, 1, RED);
  R(1626, 461, 51, 1, LIME);
  R(1626, 462, 51, 11, BK);
  s.push('<path d="M1629 471l3 -6 3 6z" fill="#fff"/>');
  T(1676, 472, '0.7758', 'lbl', WH);
  T(1676, 647, '0.7500', 'lbl', '#101010');
  T(1676, 832, '0.8600', 'lbl', '#101010');
  T(1676, 869, '0.8400', 'lbl', '#101010');
  T(1676, 907, '0.8200', 'lbl', '#101010');
  T(1676, 944, '0.8000', 'lbl', '#101010');
  R(1626, 917, 51, 11, RED);
  T(1676, 926, '-0.0090', 'lbl', '#101010');
  R(1626, 928, 51, 11, BL);
  T(1676, 937, '-0.0103', 'lbl', '#101010');

  // time strip
  var cols = ['#00c8c8', '#00c800', '#c80000', '#0000c8', '#c8c800'];
  var sx = 17, ci = 0;
  while (sx < 1536) { R(sx, 950, Math.min(48, 1536 - sx), 3, cols[ci % 5]); sx += 48; ci++; }
  // time labels
  T(22, 963, '11:00', 'tm');
  [['13 19:00', 68], ['15 19:00', 164], ['19 15:00', 252], ['20 19:00', 308], ['22 19:00', 404], ['26 15:00', 491], ['27 19:00', 547], ['29 19:00', 644], ['2 15:00', 731], ['3 19:00', 788], ['4 19:00', 836], ['5 19:00', 884], ['6 19:00', 932], ['9 19:00', 980], ['10 19:00', 1027], ['12 19:00', 1123], ['16 15:00', 1212], ['17 19:00', 1267], ['19 19:00', 1364], ['23 15:00', 1451], ['24 19:00', 1507]].forEach(function (t) {
    R(t[1], 950, 1, 15, BK);
    T(t[1] + 2, 963, t[0], 'tm');
  });
  R(3, 947, 13, 18, WH);
  // nav buttons
  R(1647, 951, 15, 14, '#2818a8');
  R(1662, 951, 15, 14, '#a82010');
  s.push('<path d="M1652 954.500h7v7h-7zM1658 958h-5M1655 956l-2 2 2 2" fill="none" stroke="#fff" stroke-width="1"/>');
  s.push('<path d="M1666 954.500h7v7h-7zM1666 958h5M1669 956l2 2-2 2" fill="none" stroke="#fff" stroke-width="1"/>');

  document.getElementById('chart').innerHTML = s.join('');
})();
```
